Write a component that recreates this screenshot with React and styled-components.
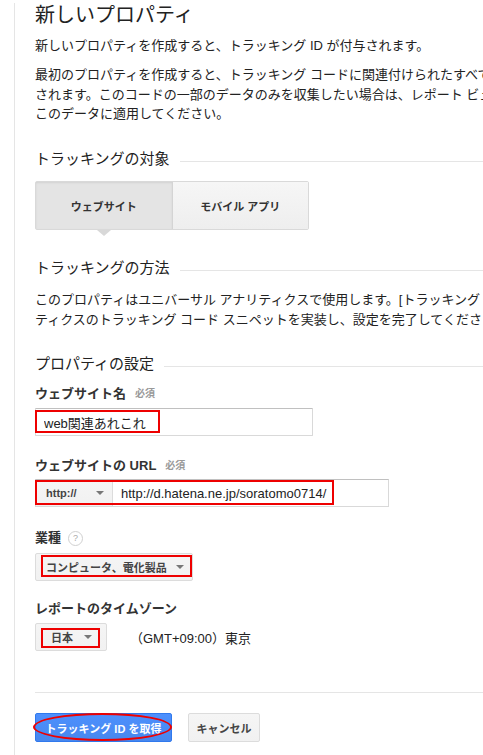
import React from 'react';
import styled, { createGlobalStyle } from 'styled-components';

const GlobalStyle = createGlobalStyle`
  html, body {
    margin: 0;
    padding: 0;
    overflow: hidden;
    background: #fff;
  }
  body {
    font-family: "Liberation Sans", "Noto Sans CJK JP", sans-serif;
    color: #222;
  }
`

const Page = styled.div`
  margin-left: 14px;
  border-left: 1px solid #e5e5e5;
  padding-left: 20px;
  width: 760px;
  min-height: 755px;
  box-sizing: border-box;
`

const Title = styled.h1`
  margin: 3px 0 0;
  font-size: 20px;
  line-height: 24px;
  font-weight: normal;
  color: #222;
`

const Lead = styled.p`
  margin: 10px 0 0;
  font-size: 13px;
  line-height: 18px;
  white-space: nowrap;
`

const Text = styled.p`
  margin: ${props => props.$mt || 10}px 0 0;
  font-size: 13px;
  line-height: ${props => props.$lh || 19.5}px;
  white-space: nowrap;
  span { display: block; }
`

const SectionHeading = styled.h2`
  display: flex;
  align-items: center;
  margin: ${props => props.$mt}px 0 0;
  font-size: 15px;
  line-height: 20px;
  font-weight: normal;
  color: #222;
  &:after {
    content: '';
    flex: 1;
    height: 1px;
    margin: 4px 0 0 10px;
    background: #e5e5e5;
  }
`

const Tabs = styled.div`
  display: flex;
  width: 274px;
  height: 49px;
  margin-top: 12px;
  border: 1px solid #d9d9d9;
  border-radius: 2px;
  box-sizing: border-box;
`

const Tab = styled.div`
  position: relative;
  flex: 1;
  display: flex;
  align-items: center;
  justify-content: center;
  font-size: 11px;
  font-weight: bold;
  color: #333;
  background: ${props => props.$active
    ? '#e4e4e4'
    : 'linear-gradient(#f6f6f6, #eeeeee)'};
  box-shadow: ${props => props.$active ? 'inset 0 1px 2px rgba(0,0,0,0.08)' : 'none'};
  border-right: ${props => props.$active ? '1px solid #d4d4d4' : 'none'};
  &:after {
    content: '';
    display: ${props => props.$active ? 'block' : 'none'};
    position: absolute;
    top: 100%;
    left: 50%;
    margin-left: -7px;
    margin-top: 1px;
    border-left: 7px solid transparent;
    border-right: 7px solid transparent;
    border-top: 6px solid #d8d8d8;
  }
`

const Field = styled.div`
  margin-top: ${props => props.$mt}px;
`

const Label = styled.div`
  display: flex;
  align-items: center;
  font-size: 13px;
  line-height: 18px;
  font-weight: bold;
  color: #333;
  margin-bottom: ${props => props.$mb || 5}px;
`

const Required = styled.span`
  margin-left: 9px;
  font-size: 10px;
  font-weight: bold;
  color: #999;
`

const HelpIcon = styled.span`
  display: inline-flex;
  align-items: center;
  justify-content: center;
  width: 13px;
  height: 13px;
  margin-left: 7px;
  border: 1px solid #d0d0d0;
  border-radius: 50%;
  font-size: 9px;
  font-weight: normal;
  color: #aaa;
`

const Marked = styled.div`
  position: relative;
  display: inline-block;
  vertical-align: top;
`

const RedBox = styled.div`
  position: absolute;
  left: ${props => props.$x}px;
  top: ${props => props.$y}px;
  width: ${props => props.$w}px;
  height: ${props => props.$h}px;
  border: 2px solid #ee0000;
  border-radius: ${props => props.$round ? '50%' : '0'};
  box-sizing: border-box;
  pointer-events: none;
`

const TextInput = styled.input`
  display: block;
  width: 278px;
  height: 28px;
  margin: 0;
  padding: 0 8px;
  box-sizing: border-box;
  border: 1px solid #d9d9d9;
  border-top-color: #c0c0c0;
  border-radius: 1px;
  font: inherit;
  font-size: 13px;
  color: #222;
  background: #fff;
  outline: none;
`

const UrlGroup = styled.div`
  display: flex;
  width: 354px;
  height: 28px;
  box-sizing: border-box;
  border: 1px solid #d9d9d9;
  border-top-color: #c0c0c0;
`

const UrlInput = styled.input`
  flex: 1;
  min-width: 0;
  margin: 0;
  padding: 0 8px;
  border: none;
  font: inherit;
  font-size: 13px;
  color: #222;
  background: #fff;
  outline: none;
`

const Select = styled.div`
  display: flex;
  align-items: center;
  justify-content: space-between;
  width: ${props => props.$w}px;
  height: ${props => props.$h || 28}px;
  padding: ${props => props.$pad};
  box-sizing: border-box;
  border: ${props => props.$inset ? 'none' : '1px solid #dcdcdc'};
  border-right: 1px solid #dcdcdc;
  border-radius: ${props => props.$inset ? '0' : '2px'};
  background: linear-gradient(#f5f5f5, #f1f1f1);
  font-size: 11px;
  font-weight: bold;
  color: #444;
`

const Caret = styled.span`
  width: 0;
  height: 0;
  border-left: 4px solid transparent;
  border-right: 4px solid transparent;
  border-top: 4px solid #777;
`

const ZoneRow = styled.div`
  display: flex;
  align-items: center;
`

const ZoneName = styled.span`
  margin-left: 23px;
  font-size: 13px;
  color: #222;
`

const Divider = styled.hr`
  margin: 41px 0 0;
  border: none;
  height: 1px;
  background: #e5e5e5;
`

const ButtonRow = styled.div`
  display: flex;
  gap: 16px;
  margin-top: 20px;
`

const Button = styled.button`
  height: 29px;
  width: ${props => props.$w}px;
  margin: 0;
  padding: 0;
  box-sizing: border-box;
  border-radius: 2px;
  font-family: inherit;
  font-size: 11px;
  font-weight: bold;
  cursor: pointer;
  border: 1px solid ${props => props.$primary ? '#3079ed' : '#dcdcdc'};
  color: ${props => props.$primary ? '#fff' : '#444'};
  background: ${props => props.$primary
    ? 'linear-gradient(#4d90fe, #4787ed)'
    : 'linear-gradient(#f5f5f5, #f1f1f1)'};
`

export default function App() {
  return (
    <>
      <GlobalStyle />
      <Page>
        <Title>新しいプロパティ</Title>
        <Lead>新しいプロパティを作成すると、トラッキング ID が付与されます。</Lead>
        <Text>
          <span>最初のプロパティを作成すると、トラッキング コードに関連付けられたすべてのデータを収集するレポート ビューが作成</span>
          <span>されます。このコードの一部のデータのみを収集したい場合は、レポート ビューにフィルタを作成して、</span>
          <span>このデータに適用してください。</span>
        </Text>

        <SectionHeading $mt={25.5}>トラッキングの対象</SectionHeading>
        <Tabs>
          <Tab $active>ウェブサイト</Tab>
          <Tab>モバイル アプリ</Tab>
        </Tabs>

        <SectionHeading $mt={28}>トラッキングの方法</SectionHeading>
        <Text $mt={12} $lh={20}>
          <span>このプロパティはユニバーサル アナリティクスで使用します。[トラッキング ID を取得] をクリックし、ユニバーサル アナリ</span>
          <span>ティクスのトラッキング コード スニペットを実装し、設定を完了してください。</span>
        </Text>

        <SectionHeading $mt={24}>プロパティの設定</SectionHeading>

        <Field $mt={11}>
          <Label>ウェブサイト名<Required>必須</Required></Label>
          <Marked>
            <TextInput readOnly value="web関連あれこれ" />
            <RedBox $x={0} $y={2} $w={125} $h={23} />
          </Marked>
        </Field>

        <Field $mt={21}>
          <Label $mb={4}>ウェブサイトの URL<Required>必須</Required></Label>
          <Marked>
            <UrlGroup>
              <Select $w={77} $h={26} $pad="0 8px 0 10px" $inset>
                http://<Caret />
              </Select>
              <UrlInput readOnly value="http://d.hatena.ne.jp/soratomo0714/" />
            </UrlGroup>
            <RedBox $x={0} $y={1} $w={299} $h={25} />
          </Marked>
        </Field>

        <Field $mt={22}>
          <Label $mb={6}>業種<HelpIcon>?</HelpIcon></Label>
          <Marked>
            <Select $w={158} $pad="0 8px 0 10px">
              コンピュータ、電化製品<Caret />
            </Select>
            <RedBox $x={6} $y={2} $w={151} $h={22} />
          </Marked>
        </Field>

        <Field $mt={19}>
          <Label>レポートのタイムゾーン</Label>
          <ZoneRow>
            <Marked>
              <Select $w={72} $pad="0 14px 0 15px">
                日本<Caret />
              </Select>
              <RedBox $x={6} $y={5} $w={59} $h={20} />
            </Marked>
            <ZoneName>（GMT+09:00）東京</ZoneName>
          </ZoneRow>
        </Field>

        <Divider />

        <ButtonRow>
          <Marked>
            <Button $primary $w={137}>トラッキング ID を取得</Button>
            <RedBox $x={-2} $y={0} $w={139} $h={28} $round />
          </Marked>
          <Button $w={72}>キャンセル</Button>
        </ButtonRow>
      </Page>
    </>
  );
}
